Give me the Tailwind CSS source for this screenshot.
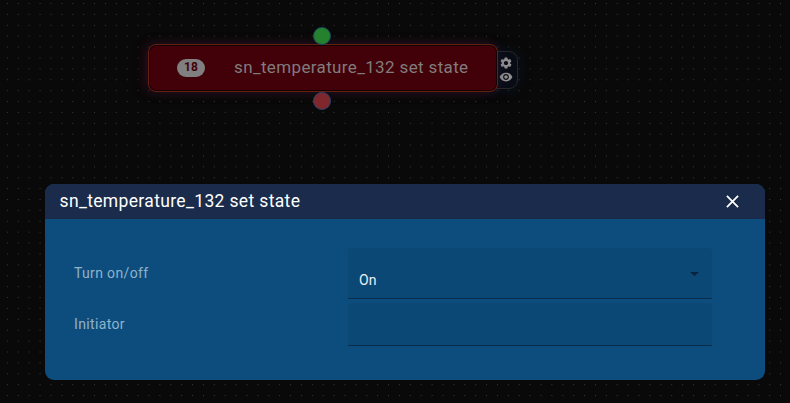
<!DOCTYPE html>
<html lang="en">
<head>
<meta charset="utf-8">
<title>Node settings</title>
<script src="https://cdn.jsdelivr.net/npm/@tailwindcss/browser@4"></script>
</head>
<body class="relative h-[403px] w-[790px] overflow-hidden bg-[#090909] font-['Roboto',sans-serif]">
  <svg class="absolute inset-0 size-full" aria-hidden="true">
    <defs>
      <pattern id="dots" x="6.9" y="3" width="10.89" height="10.89" patternUnits="userSpaceOnUse">
        <rect width="1" height="1" fill="#393939"/>
      </pattern>
    </defs>
    <rect width="790" height="403" fill="url(#dots)"/>
  </svg>

  <!-- canvas node -->
  <div class="absolute left-[148px] top-[44px] h-[48px] w-[350px]">
    <div class="absolute -right-[20px] top-[7px] flex h-[38px] w-[32px] flex-col items-end rounded-[9px] border border-[#262728] bg-[#080d15] pr-[4px] pt-[4px] shadow-[0_0_14px_rgba(10,35,70,0.35)]">
      <svg class="size-[14px]" viewBox="0 0 24 24" fill="#929292"><path d="M19.14 12.94c.04-.3.06-.61.06-.94 0-.32-.02-.64-.07-.94l2.03-1.58a.49.49 0 0 0 .12-.61l-1.92-3.32a.488.488 0 0 0-.59-.22l-2.39.96c-.5-.38-1.03-.7-1.62-.94l-.36-2.54a.484.484 0 0 0-.48-.41h-3.84c-.24 0-.43.17-.47.41l-.36 2.54c-.59.24-1.13.57-1.62.94l-2.39-.96c-.22-.08-.47 0-.59.22L2.74 8.87c-.12.21-.08.47.12.61l2.03 1.58c-.05.3-.09.63-.09.94s.02.64.07.94l-2.03 1.58a.49.49 0 0 0-.12.61l1.92 3.32c.12.22.37.29.59.22l2.39-.96c.5.38 1.03.7 1.62.94l.36 2.54c.05.24.24.41.48.41h3.84c.24 0 .44-.17.47-.41l.36-2.54c.59-.24 1.13-.56 1.62-.94l2.39.96c.22.08.47 0 .59-.22l1.92-3.32c.12-.22.07-.47-.12-.61l-2.01-1.58zM12 15.6c-1.98 0-3.6-1.62-3.6-3.6s1.62-3.6 3.6-3.6 3.6 1.62 3.6 3.6-1.62 3.6-3.6 3.6z"/></svg>
      <svg class="size-[14px]" viewBox="0 0 24 24" fill="#929292"><path d="M12 4.5C7 4.5 2.73 7.61 1 12c1.73 4.39 6 7.5 11 7.5s9.27-3.11 11-7.5c-1.73-4.39-6-7.5-11-7.5zM12 17c-2.76 0-5-2.24-5-5s2.240-5 5-5 5 2.240 5 5-2.240 5-5 5zm0-8c-1.660 0-3 1.340-3 3s1.340 3 3 3 3-1.340 3-3-1.340-3-3-3z"/></svg>
    </div>
    <div class="relative flex size-full items-center rounded-[8px] border border-[#64200f] bg-[#420008] pl-[28px] shadow-[inset_0_0_0_1px_#150002,0_0_12px_rgba(65,38,85,0.35),-5px_0_12px_rgba(75,0,20,0.3)]">
      <span class="flex h-[18px] w-[28px] items-center justify-center rounded-full bg-[#808080] pb-[2px] text-[12px] leading-none font-bold text-[#420008]">18</span>
      <span class="ml-[29px] -mt-[2px] text-[17px] leading-[20px] tracking-[0.36px] whitespace-nowrap text-[#817c7d]">sn_temperature_132 set state</span>
    </div>
    <span class="absolute left-[165px] -top-[17px] size-[18px] rounded-full border border-[#174a61] bg-[#25812d]"></span>
    <span class="absolute left-[165px] top-[47.500px] size-[18px] rounded-full border border-[#28436f] bg-[#80272b]"></span>
  </div>

  <!-- dialog -->
  <section class="absolute left-[45px] top-[184px] flex h-[196px] w-[720px] flex-col overflow-hidden rounded-[9px] bg-[#0d4d7d]">
    <header class="flex h-[35px] shrink-0 items-center justify-between bg-[#1a2b4b] pr-[26px] pl-[14.500px]">
      <h1 class="-mt-[2px] text-[17.5px] leading-[20px] tracking-[0.350px] text-white">sn_temperature_132 set state</h1>
      <svg class="size-[13px]" viewBox="0 0 13 13" stroke="#fff" stroke-width="1.8"><path d="M.9.9 12.100 12.100M12.100.9.9 12.100"/></svg>
    </header>
    <div class="grid grid-cols-[274px_364px] grid-rows-[51px_43px] gap-y-[4px] pt-[29px] pl-[29px] text-[14px]">
      <label class="pt-[15px] leading-[20px] tracking-[0.350px] text-[#8fb3cc]">Turn on/off</label>
      <div class="flex items-start justify-between rounded-t-[4px] border-b border-[#092c49] bg-[#0c4876] pr-[13px] pl-[11px]">
        <span class="pt-[22px] leading-[20px] text-[#e9f0f5]">On</span>
        <svg class="mt-[24px] h-[4px] w-[9px]" viewBox="0 0 9 4" fill="#09253d"><path d="M0 0h9L4.500 4z"/></svg>
      </div>
      <label class="pt-[11px] leading-[20px] tracking-[0.350px] text-[#8fb3cc]">Initiator</label>
      <div class="rounded-t-[4px] border-b border-[#092c49] bg-[#0c4876]"></div>
    </div>
  </section>
</body>
</html>
